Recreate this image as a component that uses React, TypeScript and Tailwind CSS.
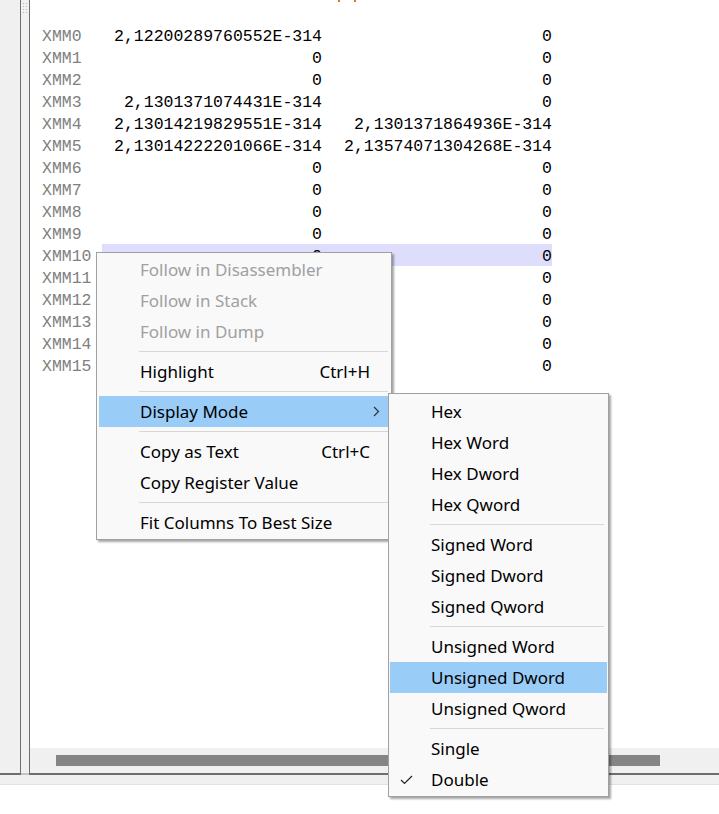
import React from "react";

const rows: [string, string, string][] = [
  ["XMM0", "2,12200289760552E-314", "0"],
  ["XMM1", "0", "0"],
  ["XMM2", "0", "0"],
  ["XMM3", "2,1301371074431E-314", "0"],
  ["XMM4", "2,13014219829551E-314", "2,1301371864936E-314"],
  ["XMM5", "2,13014222201066E-314", "2,13574071304268E-314"],
  ["XMM6", "0", "0"],
  ["XMM7", "0", "0"],
  ["XMM8", "0", "0"],
  ["XMM9", "0", "0"],
  ["XMM10", "0", "0"],
  ["XMM11", "0", "0"],
  ["XMM12", "0", "0"],
  ["XMM13", "0", "0"],
  ["XMM14", "0", "0"],
  ["XMM15", "0", "0"],
];

type Item =
  | { sep: true }
  | { sep?: false; label: string; shortcut?: string; disabled?: boolean; active?: boolean; arrow?: boolean; check?: boolean };

const mainItems: Item[] = [
  { label: "Follow in Disassembler", disabled: true },
  { label: "Follow in Stack", disabled: true },
  { label: "Follow in Dump", disabled: true },
  { sep: true },
  { label: "Highlight", shortcut: "Ctrl+H" },
  { sep: true },
  { label: "Display Mode", active: true, arrow: true },
  { sep: true },
  { label: "Copy as Text", shortcut: "Ctrl+C" },
  { label: "Copy Register Value" },
  { sep: true },
  { label: "Fit Columns To Best Size" },
];

const subItems: Item[] = [
  { label: "Hex" },
  { label: "Hex Word" },
  { label: "Hex Dword" },
  { label: "Hex Qword" },
  { sep: true },
  { label: "Signed Word" },
  { label: "Signed Dword" },
  { label: "Signed Qword" },
  { sep: true },
  { label: "Unsigned Word" },
  { label: "Unsigned Dword", active: true },
  { label: "Unsigned Qword" },
  { sep: true },
  { label: "Single" },
  { label: "Double", check: true },
];

const menuFont = { fontFamily: '"Noto Sans", "Open Sans", sans-serif' };

function MenuList({ items, sepClass }: { items: Item[]; sepClass: string }) {
  return (
    <>
      {items.map((it, i) =>
        it.sep ? (
          <div key={i} className="h-[9px] flex items-center">
            <div className={"h-px bg-[#d7d7d7] " + sepClass} />
          </div>
        ) : (
          <div
            key={i}
            className={
              "relative h-[31px] flex items-center pl-[41px] pr-[18px] text-[17px] leading-none " +
              (it.active ? "bg-[#99ccf7] " : "") +
              (it.disabled ? "text-[#a0a0a0]" : "text-black")
            }
          >
            {it.check && (
              <svg className="absolute left-[10px] top-[11px]" width="13" height="10" viewBox="0 0 13 10">
                <path d="M1 5 L4.5 8.5 L12 1" fill="none" stroke="#222" strokeWidth="1.2" />
              </svg>
            )}
            <span className="flex-1 whitespace-nowrap">{it.label}</span>
            {it.shortcut && <span className="whitespace-nowrap">{it.shortcut}</span>}
            {it.arrow && (
              <svg className="absolute right-[8px] top-[10px]" width="7" height="11" viewBox="0 0 7 11">
                <path d="M1 1 L5.5 5.5 L1 10" fill="none" stroke="#333" strokeWidth="1.2" />
              </svg>
            )}
          </div>
        )
      )}
    </>
  );
}

export default function App() {
  return (
    <div className="relative w-[719px] h-[814px] bg-white overflow-hidden">
      <div className="flex h-[775px]">
        {/* left gutter */}
        <div className="w-[20px] bg-[#f0f0f0] border-b-2 border-[#6e6e6e]" />
        <div className="w-px bg-[#6e6e6e]" />
        <div className="w-[8px] bg-[#f0f0f0] flex flex-col">
          <div className="flex-1 pt-[3px] pl-[2px] flex flex-col gap-[2px]">
            <div className="flex gap-[2px]"><span className="w-px h-px bg-[#b8b8b8]" /><span className="w-px h-px bg-[#b8b8b8]" /></div>
            <div className="flex gap-[2px]"><span className="w-px h-px bg-[#b8b8b8]" /><span className="w-px h-px bg-[#b8b8b8]" /></div>
            <div className="flex gap-[2px]"><span className="w-px h-px bg-[#b8b8b8]" /><span className="w-px h-px bg-[#b8b8b8]" /></div>
            <div className="flex gap-[2px]"><span className="w-px h-px bg-[#b8b8b8]" /><span className="w-px h-px bg-[#b8b8b8]" /></div>
          </div>
          <div className="h-[2px] bg-[#c4c4c4]" />
        </div>
        <div className="w-px bg-[#6e6e6e]" />
        {/* main panel */}
        <div className="flex-1 flex flex-col border-b-2 border-[#6e6e6e]">
          <div className="flex-1 bg-white relative">
            <div className="flex h-[2px] pl-[308px] gap-[14px]">
              <span className="w-[2px] h-[2px] bg-[#d67a1a]" />
              <span className="w-[2px] h-[2px] bg-[#d67a1a]" />
            </div>
            <div
              className="pt-[22px] pl-[12px] text-[16.5px]"
              style={{ fontFamily: '"Liberation Mono", "DejaVu Sans Mono", monospace' }}
            >
              {rows.map(([name, a, b], i) => (
                <div key={name} className="flex h-[22px] items-center leading-none">
                  <div className="w-[60px] text-[#808080] translate-y-[2px]">{name}</div>
                  <div className={"w-[220px] h-full flex items-center justify-end " + (i === 10 ? "bg-[#dedefc]" : "")}>
                    <span className="translate-y-[2px]">{a}</span>
                  </div>
                  <div className={"w-[230px] h-full flex items-center justify-end " + (i === 10 ? "bg-[#dedefc]" : "")}>
                    <span className="translate-y-[2px]">{b}</span>
                  </div>
                </div>
              ))}
            </div>
          </div>
          <div className="h-[25px] bg-[#f0f0f0] flex items-center pl-[26px]">
            <div className="w-[604px] h-[11px] bg-[#858585]" />
          </div>
        </div>
      </div>
      <div className="h-[9px] bg-[#f0f0f0]" />
      <div className="h-px bg-[#e2e2e2]" />

      {/* context menu */}
      <div
        className="absolute left-[96px] top-[252px] w-[296px] bg-[#f9f9f9] border border-[#a0a0a0] py-px pl-[2px] pr-[3px] shadow-[2px_2px_2px_rgba(0,0,0,0.35)]"
        style={menuFont}
      >
        <MenuList items={mainItems} sepClass="ml-[40px] flex-1" />
      </div>

      {/* submenu */}
      <div
        className="absolute left-[388px] top-[393px] w-[221px] bg-[#f9f9f9] border border-[#a0a0a0] pt-[2px] pb-px px-px shadow-[2px_2px_2px_rgba(0,0,0,0.35)]"
        style={menuFont}
      >
        <MenuList items={subItems} sepClass="ml-[40px] mr-[3px] flex-1" />
      </div>
    </div>
  );
}
